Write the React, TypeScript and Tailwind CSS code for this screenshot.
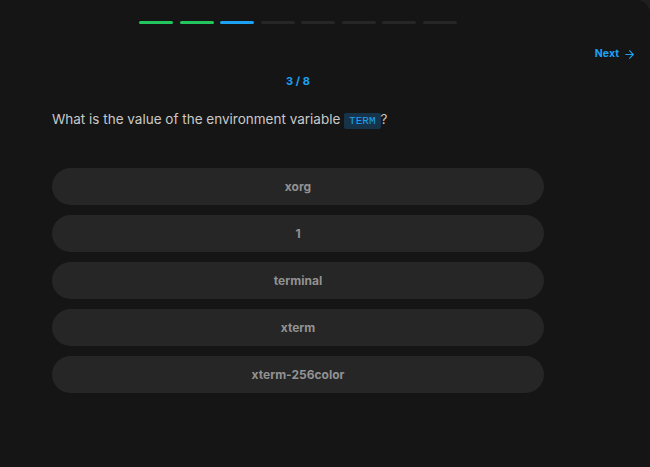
import { ArrowRight } from "lucide-react";

const options = ["xorg", "1", "terminal", "xterm", "xterm-256color"];
const total = 8;
const current = 3;

export default function App() {
  return (
    <div className="h-[467px] w-[650px] bg-[#1f1f1f] overflow-hidden" style={{ fontFamily: "Inter, 'Noto Sans', sans-serif" }}>
      <div className="h-full w-full rounded-tr-[14px] bg-[#151515] flex flex-col">
        <div className="flex pt-[21px] pl-[52px] w-[544px]">
          <div className="flex gap-[6.5px] mx-auto">
            {Array.from({ length: total }).map((_, i) => (
              <div
                key={i}
                className={
                  "h-[3px] w-[34px] rounded-full " +
                  (i < current - 1 ? "bg-[#22c55e]" : i === current - 1 ? "bg-[#1da1f2]" : "bg-[#262626]")
                }
              />
            ))}
          </div>
        </div>

        <div className="flex justify-end pr-[14px] mt-[24px]">
          <button className="flex items-center gap-[4px] text-[10.5px] font-bold text-[#1da1f2] leading-none">
            Next
            <ArrowRight size={13} strokeWidth={2} />
          </button>
        </div>

        <div className="pl-[52px] w-[544px]">
          <div className="text-center text-[11px] font-bold text-[#1da1f2] mt-[15px] leading-none">
            {current} / {total}
          </div>

          <p className="mt-[22px] text-[13.5px] text-[#c9c9c9] leading-[20px]">
            What is the value of the environment variable{" "}
            <code className="bg-[#173349] text-[#1da1f2] text-[11px] px-[5px] py-[2px] rounded-[2px]" style={{ fontFamily: "'Liberation Mono', monospace" }}>
              TERM
            </code>
            ?
          </p>

          <div className="mt-[37px] flex flex-col gap-[10px]">
            {options.map((o) => (
              <button
                key={o}
                className="h-[37px] w-full rounded-full bg-[#262626] text-[12px] font-bold text-[#929292]"
              >
                {o}
              </button>
            ))}
          </div>
        </div>
      </div>
    </div>
  );
}
